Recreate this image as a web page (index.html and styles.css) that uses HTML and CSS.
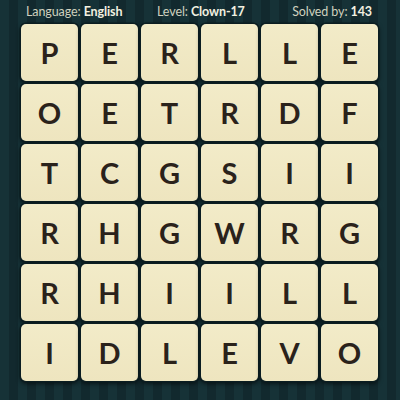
FILE: index.html
```html
<!DOCTYPE html>
<html>
<head>
<meta charset="utf-8">
<link rel="stylesheet" href="styles.css">
</head>
<body>
<div class="page">
  <div class="header">
    <div class="info">Language: <b>English</b></div>
    <div class="info">Level: <b>Clown-17</b></div>
    <div class="info right">Solved by: <b>143</b></div>
  </div>
  <div class="board">
    <div class="tile">P</div><div class="tile">E</div><div class="tile">R</div><div class="tile">L</div><div class="tile">L</div><div class="tile">E</div>
    <div class="tile">O</div><div class="tile">E</div><div class="tile">T</div><div class="tile">R</div><div class="tile">D</div><div class="tile">F</div>
    <div class="tile">T</div><div class="tile">C</div><div class="tile">G</div><div class="tile">S</div><div class="tile">I</div><div class="tile">I</div>
    <div class="tile">R</div><div class="tile">H</div><div class="tile">G</div><div class="tile">W</div><div class="tile">R</div><div class="tile">G</div>
    <div class="tile">R</div><div class="tile">H</div><div class="tile">I</div><div class="tile">I</div><div class="tile">L</div><div class="tile">L</div>
    <div class="tile">I</div><div class="tile">D</div><div class="tile">L</div><div class="tile">E</div><div class="tile">V</div><div class="tile">O</div>
  </div>
</div>
</body>
</html>
```
FILE: styles.css
```css
html, body {
  margin: 0;
  padding: 0;
}
body {
  width: 400px;
  height: 400px;
  overflow: hidden;
  background-color: #15303a;
  background-image: repeating-linear-gradient(90deg, #163237 0px, #163237 9px, #12292e 9px, #12292e 18px);
  font-family: Lato, "Open Sans", sans-serif;
}
.page {
  width: 400px;
  height: 400px;
}
.header {
  height: 23px;
  display: grid;
  grid-template-columns: 131px 1fr auto;
  align-items: center;
  padding: 0 28px 0 26px;
  color: #cfd1bf;
  font-size: 12.5px;
  letter-spacing: -0.1px;
  line-height: 23px;
}
.header b {
  color: #f2f0e0;
  font-weight: 700;
}
.board {
  display: grid;
  grid-template-columns: repeat(6, 57px);
  grid-auto-rows: 57px;
  gap: 3px 3px;
  padding-top: 1px;
  padding-left: 21px;
}
.tile {
  background: linear-gradient(#f2ebc8, #eee5bf);
  border-radius: 5px;
  box-shadow: 0 0 0 1.6px #0b1d21, 0 2px 4px 1px rgba(0, 0, 0, 0.55);
  display: flex;
  align-items: center;
  justify-content: center;
  color: #2a221b;
  font-size: 29px;
  font-weight: 700;
  line-height: 1;
}
```
